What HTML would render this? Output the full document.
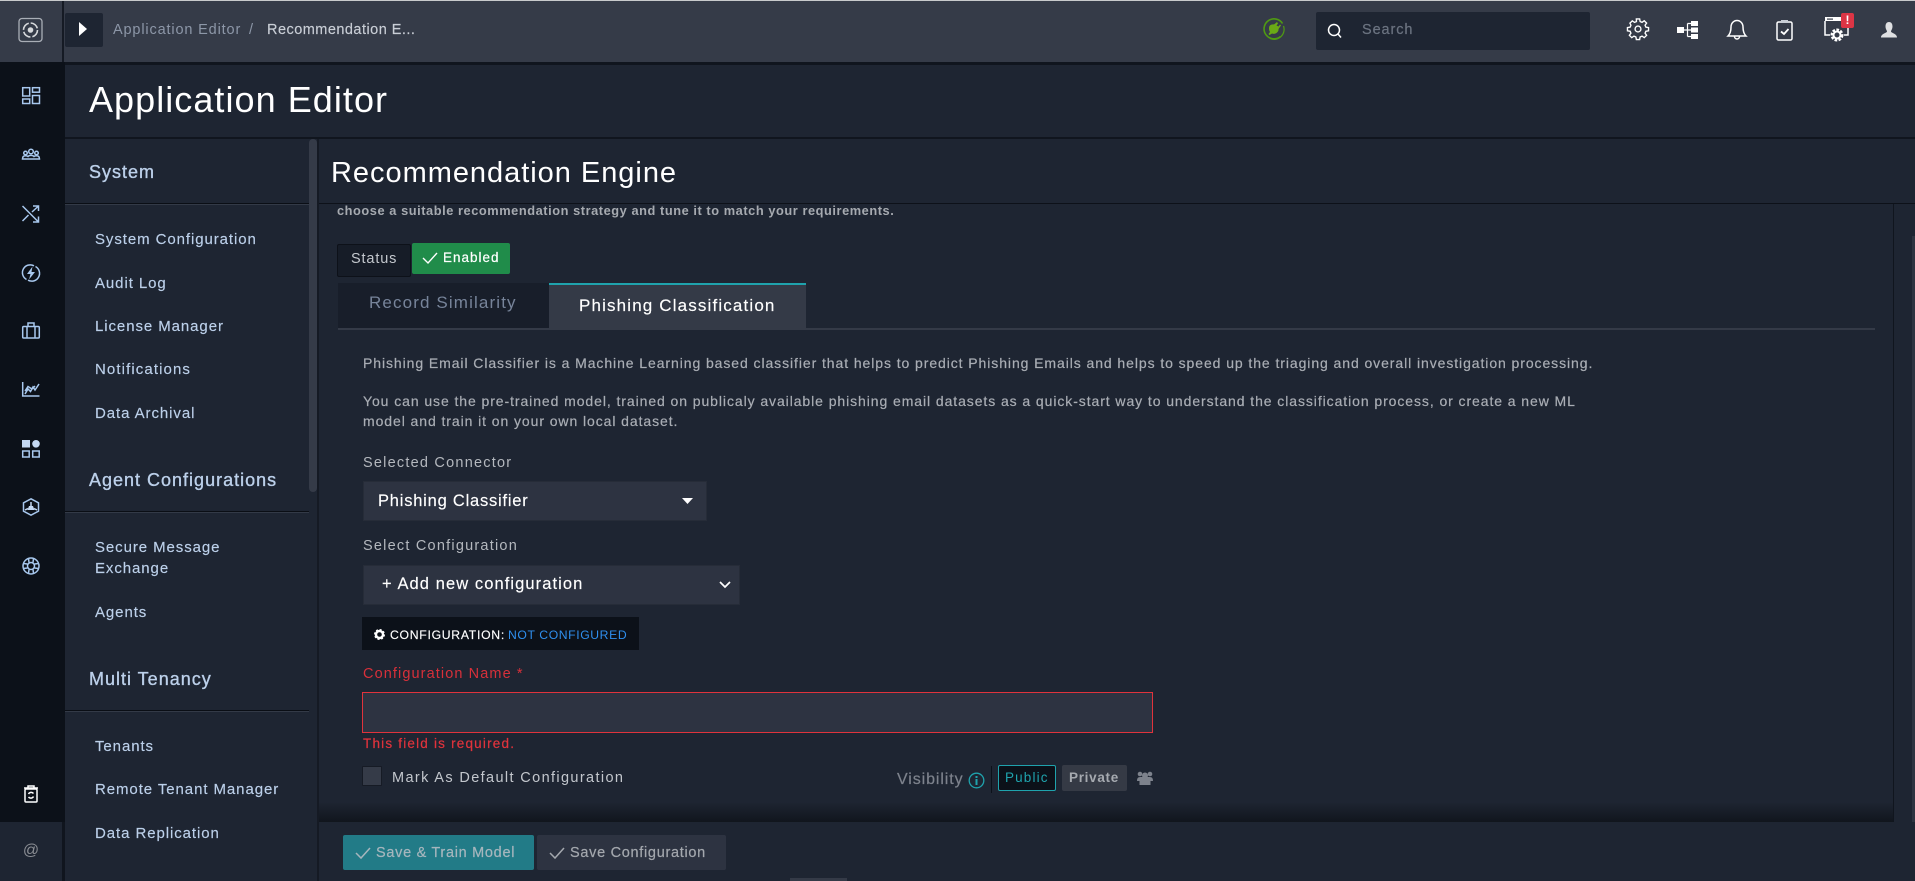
<!DOCTYPE html>
<html lang="en"><head><meta charset="utf-8"><title>Application Editor</title>
<style>
html,body{margin:0;padding:0;width:1915px;height:881px;overflow:hidden;background:#1e2532;font-family:"Liberation Sans",sans-serif}
.a{position:absolute;box-sizing:border-box}
.t{position:absolute;white-space:nowrap;line-height:20px;height:20px}
.nav{color:#bcd0ea;font-size:15px;letter-spacing:.92px;left:95px;-webkit-text-stroke:.15px}
.h{color:#bcd0ea;font-size:18px;letter-spacing:1px;left:89px;font-weight:400;-webkit-text-stroke:.35px}
.p{color:#a9adb4;font-size:14px;letter-spacing:.92px;left:363px;font-weight:400;-webkit-text-stroke:.2px}
.l{color:#b4b8be;font-size:14.5px;letter-spacing:1.22px;left:363px}
svg{position:absolute;overflow:visible}
.i{fill:none;stroke:#a8c8ee;stroke-width:1.5}
.w{fill:none;stroke:#fff;stroke-width:1.5}
</style></head><body>
<div class="a" style="left:0;top:0;width:1915px;height:881px;background:#1e2532">

<div class="a" style="left:0;top:0;width:1915px;height:1px;background:#c8cacc"></div>
<div class="a" style="left:0;top:1px;width:1915px;height:62px;background:#353b48"></div>
<div class="a" style="left:62px;top:1px;width:2px;height:62px;background:#151a24"></div>
<div class="a" style="left:0;top:62px;width:1915px;height:3px;background:#10151e"></div>

<svg style="left:18px;top:17px" width="26" height="26" viewBox="0 0 26 26"><rect x="1" y="1.500" width="23" height="23" rx="3" fill="none" stroke="#a9aeb6" stroke-width="1.300"/><circle cx="12.500" cy="13" r="2.800" fill="#d7d9dc"/><circle cx="12.500" cy="13" r="7" fill="none" stroke="#d7d9dc" stroke-width="1.600" stroke-dasharray="9 2"/></svg>
<div class="a" style="left:65px;top:13px;width:38px;height:34px;background:#1e2532;border-radius:2px"></div>
<svg style="left:78px;top:22px" width="10" height="15"><path d="M1 0 L9 7 L1 14Z" fill="#fff"/></svg>
<div class="t" style="left:113px;top:20px;color:#8d97a8;font-size:14.5px;letter-spacing:.85px">Application Editor</div>
<div class="t" style="left:249px;top:20px;color:#8d97a8;font-size:14.5px">/</div>
<div class="t" style="left:267px;top:20px;color:#c9ced6;font-size:14.5px;letter-spacing:.47px;-webkit-text-stroke:.15px">Recommendation E...</div>

<svg style="left:1262px;top:17px" width="24" height="24" viewBox="0 0 24 24"><path d="M18.500 19.500 A10 10 0 1 1 20.500 6.500" fill="none" stroke="#4f9a12" stroke-width="1.600"/><path d="M21.500 9 A10 10 0 0 1 8 21.500" fill="none" stroke="#4f9a12" stroke-width="1.200"/><path d="M7 11 C7 8 10 7 12 7.500 L15 5 L16 6.500 L14.500 8.500 L16.500 9.500 L18 7.500 L19 8.500 L16.500 12 C17 15 13 18 10 16.500 L7.500 18 L6.500 17 L8 15 C7 13.500 7 12 7 11Z" fill="#6aaa16"/></svg>
<div class="a" style="left:1316px;top:12px;width:274px;height:38px;background:#1e2532;border-radius:2px"></div>
<svg style="left:1327px;top:23px" width="16" height="16" viewBox="0 0 16 16"><circle cx="7" cy="7" r="5.500" class="w" stroke-width="1.300"/><path d="M11 11 L14 14.500" class="w"/></svg>
<div class="t" style="left:1362px;top:20px;color:#6b7380;font-size:14.5px;letter-spacing:.9px;-webkit-text-stroke:.2px">Search</div>

<svg style="left:1627px;top:18px" width="22" height="22" viewBox="0 0 24 24"><circle cx="12" cy="12" r="3.200" class="w"/><path d="M10.200 1.500h3.600l.5 2.900 2.100.9 2.400-1.700 2.600 2.600-1.700 2.400.9 2.100 2.900.5v3.600l-2.900.5-.9 2.100 1.700 2.400-2.600 2.600-2.400-1.700-2.100.9-.5 2.900h-3.600l-.5-2.900-2.100-.9-2.400 1.700-2.600-2.600 1.700-2.400-.9-2.100-2.900-.5v-3.600l2.900-.5.9-2.100L3.200 6.300l2.600-2.600 2.400 1.700 2.100-.9z" class="w" transform="translate(0 -.5) scale(1 .98)"/></svg>
<svg style="left:1677px;top:20px" width="22" height="20" viewBox="0 0 22 20"><rect x="0" y="7" width="7" height="6" fill="#fff"/><rect x="14" y="1" width="7" height="5" fill="#fff"/><rect x="14" y="7.500" width="7" height="5" fill="#fff"/><rect x="14" y="14" width="7" height="5" fill="#fff"/><path d="M7 10H14M10.500 3.500V16.500M10.500 3.500H14M10.500 16.500H14" stroke="#fff" stroke-width="1.200" fill="none"/></svg>
<svg style="left:1727px;top:19px" width="20" height="22" viewBox="0 0 20 22"><path d="M1 17 C4 14 4 10 4 8 A6 6.500 0 0 1 16 8 C16 10 16 14 19 17Z" class="w" stroke-width="1.300"/><path d="M7.500 17.500 A2.500 2.500 0 0 0 12.500 17.500" class="w" stroke-width="1.300"/></svg>
<svg style="left:1776px;top:19px" width="18" height="22" viewBox="0 0 18 22"><rect x="1" y="3" width="15" height="18" rx="1.500" class="w" stroke-width="1.300"/><rect x="5" y="1" width="7" height="3" fill="#c9ced6"/><path d="M5 12.500 L8 15 L12.500 10" stroke="#fff" stroke-width="1.800" fill="none"/></svg>
<svg style="left:1824px;top:16px" width="26" height="26" viewBox="0 0 26 26"><rect x="1" y="1" width="19" height="4" fill="#fff"/><rect x="3" y="2.500" width="6" height="1.200" fill="#353b48"/><path d="M1 5 V19 H6 M20 19 H24 V10" class="w" stroke-width="1.500"/><circle cx="13" cy="19" r="5" fill="none" stroke="#fff" stroke-width="3" stroke-dasharray="2.500 1.300"/><circle cx="13" cy="19" r="3.500" fill="none" stroke="#fff" stroke-width="2"/></svg>
<div class="a" style="left:1841px;top:13px;width:13px;height:15px;background:#dc3545;border-radius:2px;color:#fff;font-size:12px;line-height:15px;text-align:center;font-weight:700">!</div>
<svg style="left:1880px;top:21px" width="18" height="18" viewBox="0 0 18 18"><path d="M9 1 C6.500 1 5.500 3 5.500 5.500 C5.500 8 7 9.500 7 10.500 C7 12 1 12.500 1 16.500 H17 C17 12.500 11 12 11 10.500 C11 9.500 12.500 8 12.500 5.500 C12.500 3 11.500 1 9 1Z" fill="#dfe0e2"/></svg>

<div class="a" style="left:0;top:62px;width:65px;height:760px;background:#0c1119"></div>
<div class="a" style="left:0;top:822px;width:62px;height:59px;background:#1e2532"></div>
<div class="a" style="left:62px;top:822px;width:3px;height:59px;background:#10151e"></div>
<div class="t" style="left:0;top:841px;width:62px;text-align:center;color:#8b8e94;font-size:16px">@</div>

<svg style="left:22px;top:87px" width="18" height="18" viewBox="0 0 18 18"><rect x=".7" y=".7" width="7" height="8.300" class="i" stroke-width="1.200"/><rect x="10.500" y=".7" width="7" height="4.500" class="i" stroke-width="1.200"/><rect x=".7" y="12" width="7" height="4.500" class="i" stroke-width="1.200"/><rect x="10.500" y="8.500" width="7" height="8" class="i" stroke-width="1.200"/></svg>
<svg style="left:22px;top:148px" width="18" height="14" viewBox="0 0 18 14"><circle cx="9" cy="3.500" r="2.300" class="i" stroke-width="1"/><circle cx="3.500" cy="5" r="1.800" class="i" stroke-width="1"/><circle cx="14.500" cy="5" r="1.800" class="i" stroke-width="1"/><path d="M.5 11 C.5 8.500 2 7.800 3.500 7.800 C5 7.800 5.500 8 6 8.500 C7 7 11 7 12 8.500 C12.500 8 13 7.800 14.500 7.800 C16 7.800 17.500 8.500 17.500 11 Z" class="i" stroke-width="1"/></svg>
<svg style="left:22px;top:205px" width="18" height="18" viewBox="0 0 18 18"><path d="M.5 1 L16.500 17 M11 17 H16.500 V11.500 M.5 16 L6.500 10 M10 7 L16.500 1 M11 1 H16.500 V6" class="i" stroke-width="1.100"/></svg>
<svg style="left:22px;top:264px" width="18" height="18" viewBox="0 0 18 18"><path d="M12 1.800 A7.800 7.800 0 0 0 4.500 15.500" class="i"/><path d="M6 16.200 A7.800 7.800 0 0 0 13.500 2.500" class="i"/><path d="M10.500 2.500 L5 10 H8.500 L7 15.500 L13 8 H9.500Z" fill="#a8c8ee"/></svg>
<svg style="left:22px;top:322px" width="18" height="17" viewBox="0 0 18 17"><rect x=".7" y="4.500" width="16.600" height="11.500" rx="1" class="i" stroke-width="1.100"/><path d="M6 4.500V1h6v3.500M5 4.500v11.500M13 4.500v11.500" class="i" stroke-width="1.100"/></svg>
<svg style="left:22px;top:382px" width="18" height="15" viewBox="0 0 18 15"><path d="M.7 0 V14 H17.500 M3 12 L6 7 L8.500 9.500 L11 5 L13 8 L17 2 M3 9 L6 4.500 L10 7 L13 4" class="i" stroke-width=".8"/></svg>
<svg style="left:22px;top:440px" width="18" height="18" viewBox="0 0 18 18"><rect x="0" y="0" width="8" height="7.500" fill="#c4d8f2"/><circle cx="14" cy="3.800" r="3.800" fill="#c4d8f2"/><rect x=".7" y="11" width="6.500" height="6" class="i" stroke-width="1.200"/><rect x="10.700" y="11" width="6.500" height="6" class="i" stroke-width="1.200"/></svg>
<svg style="left:22px;top:498px" width="18" height="18" viewBox="0 0 18 18"><path d="M9 .8 L16.500 4.800 V13.200 L9 17.200 L1.500 13.200 V4.800Z" class="i"/><path d="M9 4 V8 M3 12 L6 10.500 M15 12 L12 10.500" stroke="#c4d8f2" stroke-width="1.500"/><path d="M5.500 12 L7 8 H11 L12.500 12Z" fill="#c4d8f2"/></svg>
<svg style="left:22px;top:557px" width="18" height="18" viewBox="0 0 18 18"><circle cx="9" cy="9" r="8" class="i"/><circle cx="9" cy="9" r="3.500" class="i"/><path d="M6.500 1.500 L7 5.500 M11.500 1.500 L11 5.500 M6.500 16.500 L7 12.500 M11.500 16.500 L11 12.500 M1.500 6.500 L5.500 7 M1.500 11.500 L5.500 11 M16.500 6.500 L12.500 7 M16.500 11.500 L12.500 11" class="i" stroke-width="1"/></svg>
<svg style="left:23px;top:785px" width="16" height="18" viewBox="0 0 16 18"><path d="M1 3H15M5 3V1H11V3" class="w" stroke-width="1.300"/><rect x="2" y="4" width="12" height="13" rx="1" class="w" stroke-width="1.300"/><path d="M10.500 8.500 A3 3 0 0 0 5.500 9 M5.500 12 A3 3 0 0 0 10.500 11.500" class="w" stroke-width="1.300"/></svg>

<div class="a" style="left:65px;top:65px;width:1850px;height:72px;background:#1e2532"></div>
<div class="t" style="left:89px;top:79px;height:42px;line-height:42px;color:#fff;font-size:36px;letter-spacing:1.05px">Application Editor</div>
<div class="a" style="left:65px;top:137px;width:1850px;height:2px;background:#10151e"></div>

<div class="a" style="left:309px;top:139px;width:8px;height:353px;background:#353b48;border-radius:4px"></div>
<div class="a" style="left:317px;top:139px;width:2px;height:742px;background:#151a24"></div>
<div class="a" style="left:65px;top:203px;width:244px;height:1px;background:#0a0e15"></div>
<div class="a" style="left:65px;top:204px;width:244px;height:1px;background:#333a47"></div>
<div class="a" style="left:65px;top:511px;width:244px;height:1px;background:#0a0e15"></div>
<div class="a" style="left:65px;top:512px;width:244px;height:1px;background:#333a47"></div>
<div class="a" style="left:65px;top:710px;width:244px;height:1px;background:#0a0e15"></div>
<div class="a" style="left:65px;top:711px;width:244px;height:1px;background:#333a47"></div>

<div class="t h" style="top:162px">System</div>
<div class="t nav" style="top:230px">System Configuration</div>
<div class="t nav" style="top:274px">Audit Log</div>
<div class="t nav" style="top:317px">License Manager</div>
<div class="t nav" style="top:360px;letter-spacing:1.1px">Notifications</div>
<div class="t nav" style="top:404px">Data Archival</div>
<div class="t h" style="top:470px">Agent Configurations</div>
<div class="t nav" style="top:538px">Secure Message</div>
<div class="t nav" style="top:559px">Exchange</div>
<div class="t nav" style="top:603px">Agents</div>
<div class="t h" style="top:669px">Multi Tenancy</div>
<div class="t nav" style="top:737px">Tenants</div>
<div class="t nav" style="top:780px">Remote Tenant Manager</div>
<div class="t nav" style="top:824px">Data Replication</div>

<div class="t" style="left:331px;top:153px;height:40px;line-height:40px;color:#fff;font-size:29px;letter-spacing:.97px">Recommendation Engine</div>
<div class="a" style="left:319px;top:203px;width:1596px;height:1px;background:#0d1119"></div>
<div class="a" style="left:1893px;top:204px;width:1px;height:677px;background:#10151e"></div>
<div class="a" style="left:1912px;top:236px;width:3px;height:645px;background:#2e3441"></div>

<div class="t" style="left:337px;top:201px;font-weight:700;font-size:12.8px;letter-spacing:.56px;color:#a6aab0">choose a suitable recommendation strategy and tune it to match your requirements.</div>

<div class="a" style="left:337px;top:244px;width:74px;height:33px;background:#161c27;border:1px solid #0d1119;border-radius:2px"></div>
<div class="t" style="left:351px;top:249px;color:#c3c7cd;font-size:14.5px;letter-spacing:.85px">Status</div>
<div class="a" style="left:412px;top:243px;width:98px;height:31px;background:#208c4a;border-radius:2px"></div>
<svg style="left:422px;top:252px" width="16" height="12"><path d="M1 6 L6 11 L15 1" stroke="#fff" stroke-width="1.400" fill="none"/></svg>
<div class="t" style="left:443px;top:248px;color:#fff;font-size:13.5px;letter-spacing:1px;-webkit-text-stroke:.2px">Enabled</div>

<div class="a" style="left:338px;top:283px;width:211px;height:45px;background:#181e2a"></div>
<div class="a" style="left:549px;top:283px;width:257px;height:45px;background:#343a47;border-top:2px solid #1fa3ad"></div>
<div class="a" style="left:338px;top:328px;width:1537px;height:2px;background:#343a47"></div>
<div class="t" style="left:369px;top:293px;color:#77849a;font-size:17px;letter-spacing:1.13px">Record Similarity</div>
<div class="t" style="left:579px;top:296px;color:#fff;font-size:17px;letter-spacing:1.15px;-webkit-text-stroke:.15px">Phishing Classification</div>

<div class="t p" style="top:353px">Phishing Email Classifier is a Machine Learning based classifier that helps to predict Phishing Emails and helps to speed up the triaging and overall investigation processing.</div>
<div class="t p" style="top:391px">You can use the pre-trained model, trained on publicaly available phishing email datasets as a quick-start way to understand the classification process, or create a new ML</div>
<div class="t p" style="top:411px">model and train it on your own local dataset.</div>

<div class="t l" style="top:453px">Selected Connector</div>
<div class="a" style="left:363px;top:481px;width:344px;height:40px;background:#2d3341;border:1px solid #262c38"></div>
<div class="t" style="left:378px;top:491px;color:#fff;font-size:16.5px;letter-spacing:.78px;-webkit-text-stroke:.15px">Phishing Classifier</div>
<svg style="left:682px;top:497px" width="12" height="8"><path d="M0 1H11L5.500 7Z" fill="#fff"/></svg>

<div class="t l" style="top:536px">Select Configuration</div>
<div class="a" style="left:363px;top:565px;width:377px;height:40px;background:#2d3341;border:1px solid #262c38"></div>
<div class="t" style="left:382px;top:574px;color:#fff;font-size:16.5px;letter-spacing:1.08px;-webkit-text-stroke:.15px">+ Add new configuration</div>
<svg style="left:719px;top:581px" width="12" height="8"><path d="M1 1 L6 6 L11 1" stroke="#fff" stroke-width="1.700" fill="none"/></svg>

<div class="a" style="left:362px;top:617px;width:277px;height:33px;background:#0c1119"></div>
<svg style="left:374px;top:629px" width="11" height="11" viewBox="0 0 11 11"><circle cx="5.500" cy="5.500" r="3.500" fill="none" stroke="#fff" stroke-width="2.400"/><circle cx="5.500" cy="5.500" r="4.800" fill="none" stroke="#fff" stroke-width="1.400" stroke-dasharray="2 1.770"/></svg>
<div class="t" style="left:390px;top:625px;color:#fff;font-size:12.2px;letter-spacing:.73px;-webkit-text-stroke:.15px">CONFIGURATION:</div>
<div class="t" style="left:508px;top:625px;color:#2f8fee;font-size:12.2px;letter-spacing:.6px">NOT CONFIGURED</div>

<div class="t l" style="top:664px;color:#d8303a;letter-spacing:1.1px">Configuration Name *</div>
<div class="a" style="left:362px;top:692px;width:791px;height:41px;background:#2d3341;border:1px solid #e0333c"></div>
<div class="t" style="left:363px;top:734px;color:#e0333c;font-size:13.5px;letter-spacing:1.2px;-webkit-text-stroke:.2px">This field is required.</div>

<div class="a" style="left:362px;top:766px;width:20px;height:20px;background:#353b48;border:1px solid #161b25;border-radius:1px"></div>
<div class="t" style="left:392px;top:768px;color:#c3c7cd;font-size:14.5px;letter-spacing:1.37px">Mark As Default Configuration</div>

<div class="t" style="left:897px;top:770px;color:#7d828c;font-size:16px;letter-spacing:.9px;-webkit-text-stroke:.2px">Visibility</div>
<svg style="left:968px;top:772px" width="17" height="17" viewBox="0 0 17 17"><circle cx="8.500" cy="8.500" r="7.300" fill="none" stroke="#1fa3ad" stroke-width="1.300"/><rect x="7.500" y="7" width="2" height="6" fill="#1fa3ad"/><rect x="7.500" y="4" width="2" height="2" fill="#1fa3ad"/></svg>
<div class="a" style="left:991px;top:766px;width:1px;height:27px;background:#0c1119"></div>
<div class="a" style="left:998px;top:765px;width:58px;height:26px;background:#0c1119;border:1px solid #1fa3ad;border-radius:2px"></div>
<div class="t" style="left:1005px;top:768px;color:#1fa3ad;font-size:13.5px;letter-spacing:1.15px">Public</div>
<div class="a" style="left:1062px;top:765px;width:65px;height:26px;background:#353a45;border-radius:2px"></div>
<div class="t" style="left:1069px;top:768px;color:#a6aab0;font-size:13.5px;letter-spacing:.7px;font-weight:700">Private</div>
<svg style="left:1137px;top:771px" width="16" height="15" viewBox="0 0 16 15"><circle cx="3" cy="3" r="2.300" fill="#7d828c"/><circle cx="13" cy="3" r="2.300" fill="#7d828c"/><circle cx="8" cy="4.500" r="3" fill="#7d828c"/><path d="M0 10 C0 6 2 6 4 6 H12 C14 6 16 6 16 10 H13.500 V14 H2.500 V10Z" fill="#7d828c"/></svg>

<div class="a" style="left:319px;top:802px;width:1574px;height:20px;background:linear-gradient(to bottom,rgba(12,16,22,0),rgba(12,16,22,.75))"></div>
<div class="a" style="left:319px;top:822px;width:1596px;height:59px;background:#1e2532"></div>
<div class="a" style="left:343px;top:835px;width:191px;height:35px;background:#227b87;border-radius:2px"></div>
<svg style="left:355px;top:847px" width="16" height="12"><path d="M1 6 L6 11 L15 1" stroke="#a6b6bd" stroke-width="1.500" fill="none"/></svg>
<div class="t" style="left:376px;top:843px;color:#a6b6bd;font-size:14.5px;letter-spacing:.7px;-webkit-text-stroke:.2px">Save &amp; Train Model</div>
<div class="a" style="left:537px;top:835px;width:189px;height:35px;background:#2d3341;border-radius:2px"></div>
<svg style="left:549px;top:847px" width="16" height="12"><path d="M1 6 L6 11 L15 1" stroke="#a4a8ae" stroke-width="1.500" fill="none"/></svg>
<div class="t" style="left:570px;top:843px;color:#a4a8ae;font-size:14.5px;letter-spacing:.7px;-webkit-text-stroke:.2px">Save Configuration</div>
<div class="a" style="left:790px;top:878px;width:57px;height:3px;background:#343a47"></div>

</div>
</body></html>
